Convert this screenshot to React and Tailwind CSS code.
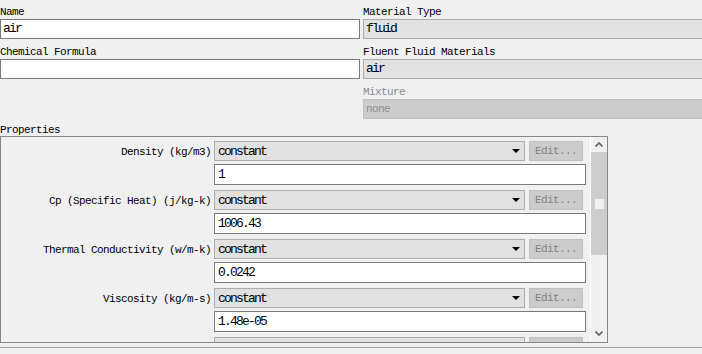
import React from 'react';

const mono = "font-['Liberation_Mono',monospace]";
const small = `${mono} text-[11px] tracking-[-0.6px]`;
const big = `${mono} text-[13px] tracking-[-1.8px]`;

// last row only peeks out below the list, so its texts stay empty
const ROWS = [
  { label: 'Density (kg/m3)', value: '1', method: 'constant', edit: 'Edit...' },
  { label: 'Cp (Specific Heat) (j/kg-k)', value: '1006.43', method: 'constant', edit: 'Edit...' },
  { label: 'Thermal Conductivity (w/m-k)', value: '0.0242', method: 'constant', edit: 'Edit...' },
  { label: 'Viscosity (kg/m-s)', value: '1.48e-05', method: 'constant', edit: 'Edit...' },
  { label: '', value: '', method: '', edit: '' },
];

function Field({ label, value, kind = 'input' }) {
  const box = {
    input: 'bg-white border-[#7a7a7a] text-black',
    readonly: 'bg-[#e1e1e1] border-[#adadad] text-black',
    disabled: 'bg-[#cccccc] border-[#bfbfbf] text-[#8c8c8c]',
  }[kind];
  return (
    <div className="flex flex-col">
      <div className={`h-[19px] pt-[6px] leading-[12px] whitespace-nowrap ${small} ${kind === 'disabled' ? 'text-[#8c8c8c]' : 'text-black'}`}>
        {label}
      </div>
      <div className={`h-[20px] border pl-[2px] leading-[18px] whitespace-nowrap ${kind === 'disabled' ? small : big} ${box}`}>
        {value}
      </div>
    </div>
  );
}

function Chevron({ up }) {
  return (
    <svg width="8" height="5" viewBox="0 0 8 5">
      <polyline
        points={up ? '0.5,4.5 4,1 7.5,4.5' : '0.5,0.5 4,4 7.5,0.5'}
        fill="none"
        stroke="#606060"
        strokeWidth="1.6"
      />
    </svg>
  );
}

function PropRow({ label, value, method, edit }) {
  return (
    <div className="flex shrink-0 flex-col">
      <div className="flex h-[20px]">
        <div className={`w-[210px] shrink-0 pt-[2px] text-right leading-[18px] whitespace-nowrap text-black ${small}`}>
          {label}
        </div>
        <div className="ml-[3px] flex h-[20px] w-[311px] items-start border border-[#adadad] bg-[#e1e1e1]">
          <span className={`flex-1 pl-[3px] pt-[2px] leading-[16px] text-black ${big}`}>{method}</span>
          <svg className="mt-[7px] mr-[4px]" width="8" height="4" viewBox="0 0 8 4">
            <polygon points="0,0 8,0 4,4" fill="#000" />
          </svg>
        </div>
        <div className={`ml-[4px] h-[20px] w-[54px] border border-[#bfbfbf] bg-[#cccccc] pt-[1px] text-center leading-[17px] text-[#838383] ${small}`}>
          {edit}
        </div>
      </div>
      <div className={`mt-[3px] ml-[213px] h-[21px] w-[372px] border border-[#7a7a7a] bg-white pl-[3px] leading-[19px] text-black ${big}`}>
        {value}
      </div>
    </div>
  );
}

export default function App() {
  return (
    <div className="h-[354px] w-[702px] overflow-hidden bg-[#f0f0f0]">
      <div className="flex gap-[3px]">
        <div className="flex w-[360px] shrink-0 flex-col gap-[1px]">
          <Field label="Name" value="air" />
          <Field label="Chemical Formula" value="" />
        </div>
        <div className="flex w-[341px] shrink-0 flex-col gap-[1px]">
          <Field label="Material Type" value="fluid" kind="readonly" />
          <Field label="Fluent Fluid Materials" value="air" kind="readonly" />
          <Field label="Mixture" value="none" kind="disabled" />
        </div>
      </div>

      <div className={`h-[17px] pt-[5px] leading-[12px] text-black ${small}`}>Properties</div>

      <div className="flex h-[207px] w-[608px] border border-[#828790]">
        <div className="flex flex-1 flex-col gap-[5px] overflow-hidden pt-[4px]">
          {ROWS.map((r, i) => (
            <PropRow key={i} {...r} />
          ))}
        </div>
        <div className="flex w-[17px] flex-col border-l border-white bg-[#f0f0f0]">
          <div className="flex h-[15px] items-center justify-center">
            <Chevron up />
          </div>
          <div className="flex h-[103px] items-center justify-center bg-[#cdcdcd]">
            <div className="h-[10px] w-[9px] bg-[#f0f0f0]" />
          </div>
          <div className="flex-1" />
          <div className="flex h-[15px] items-center justify-center pb-[2px]">
            <Chevron />
          </div>
        </div>
      </div>

      <div className="mt-[4px] h-px w-full bg-[#a0a0a0]" />
    </div>
  );
}
